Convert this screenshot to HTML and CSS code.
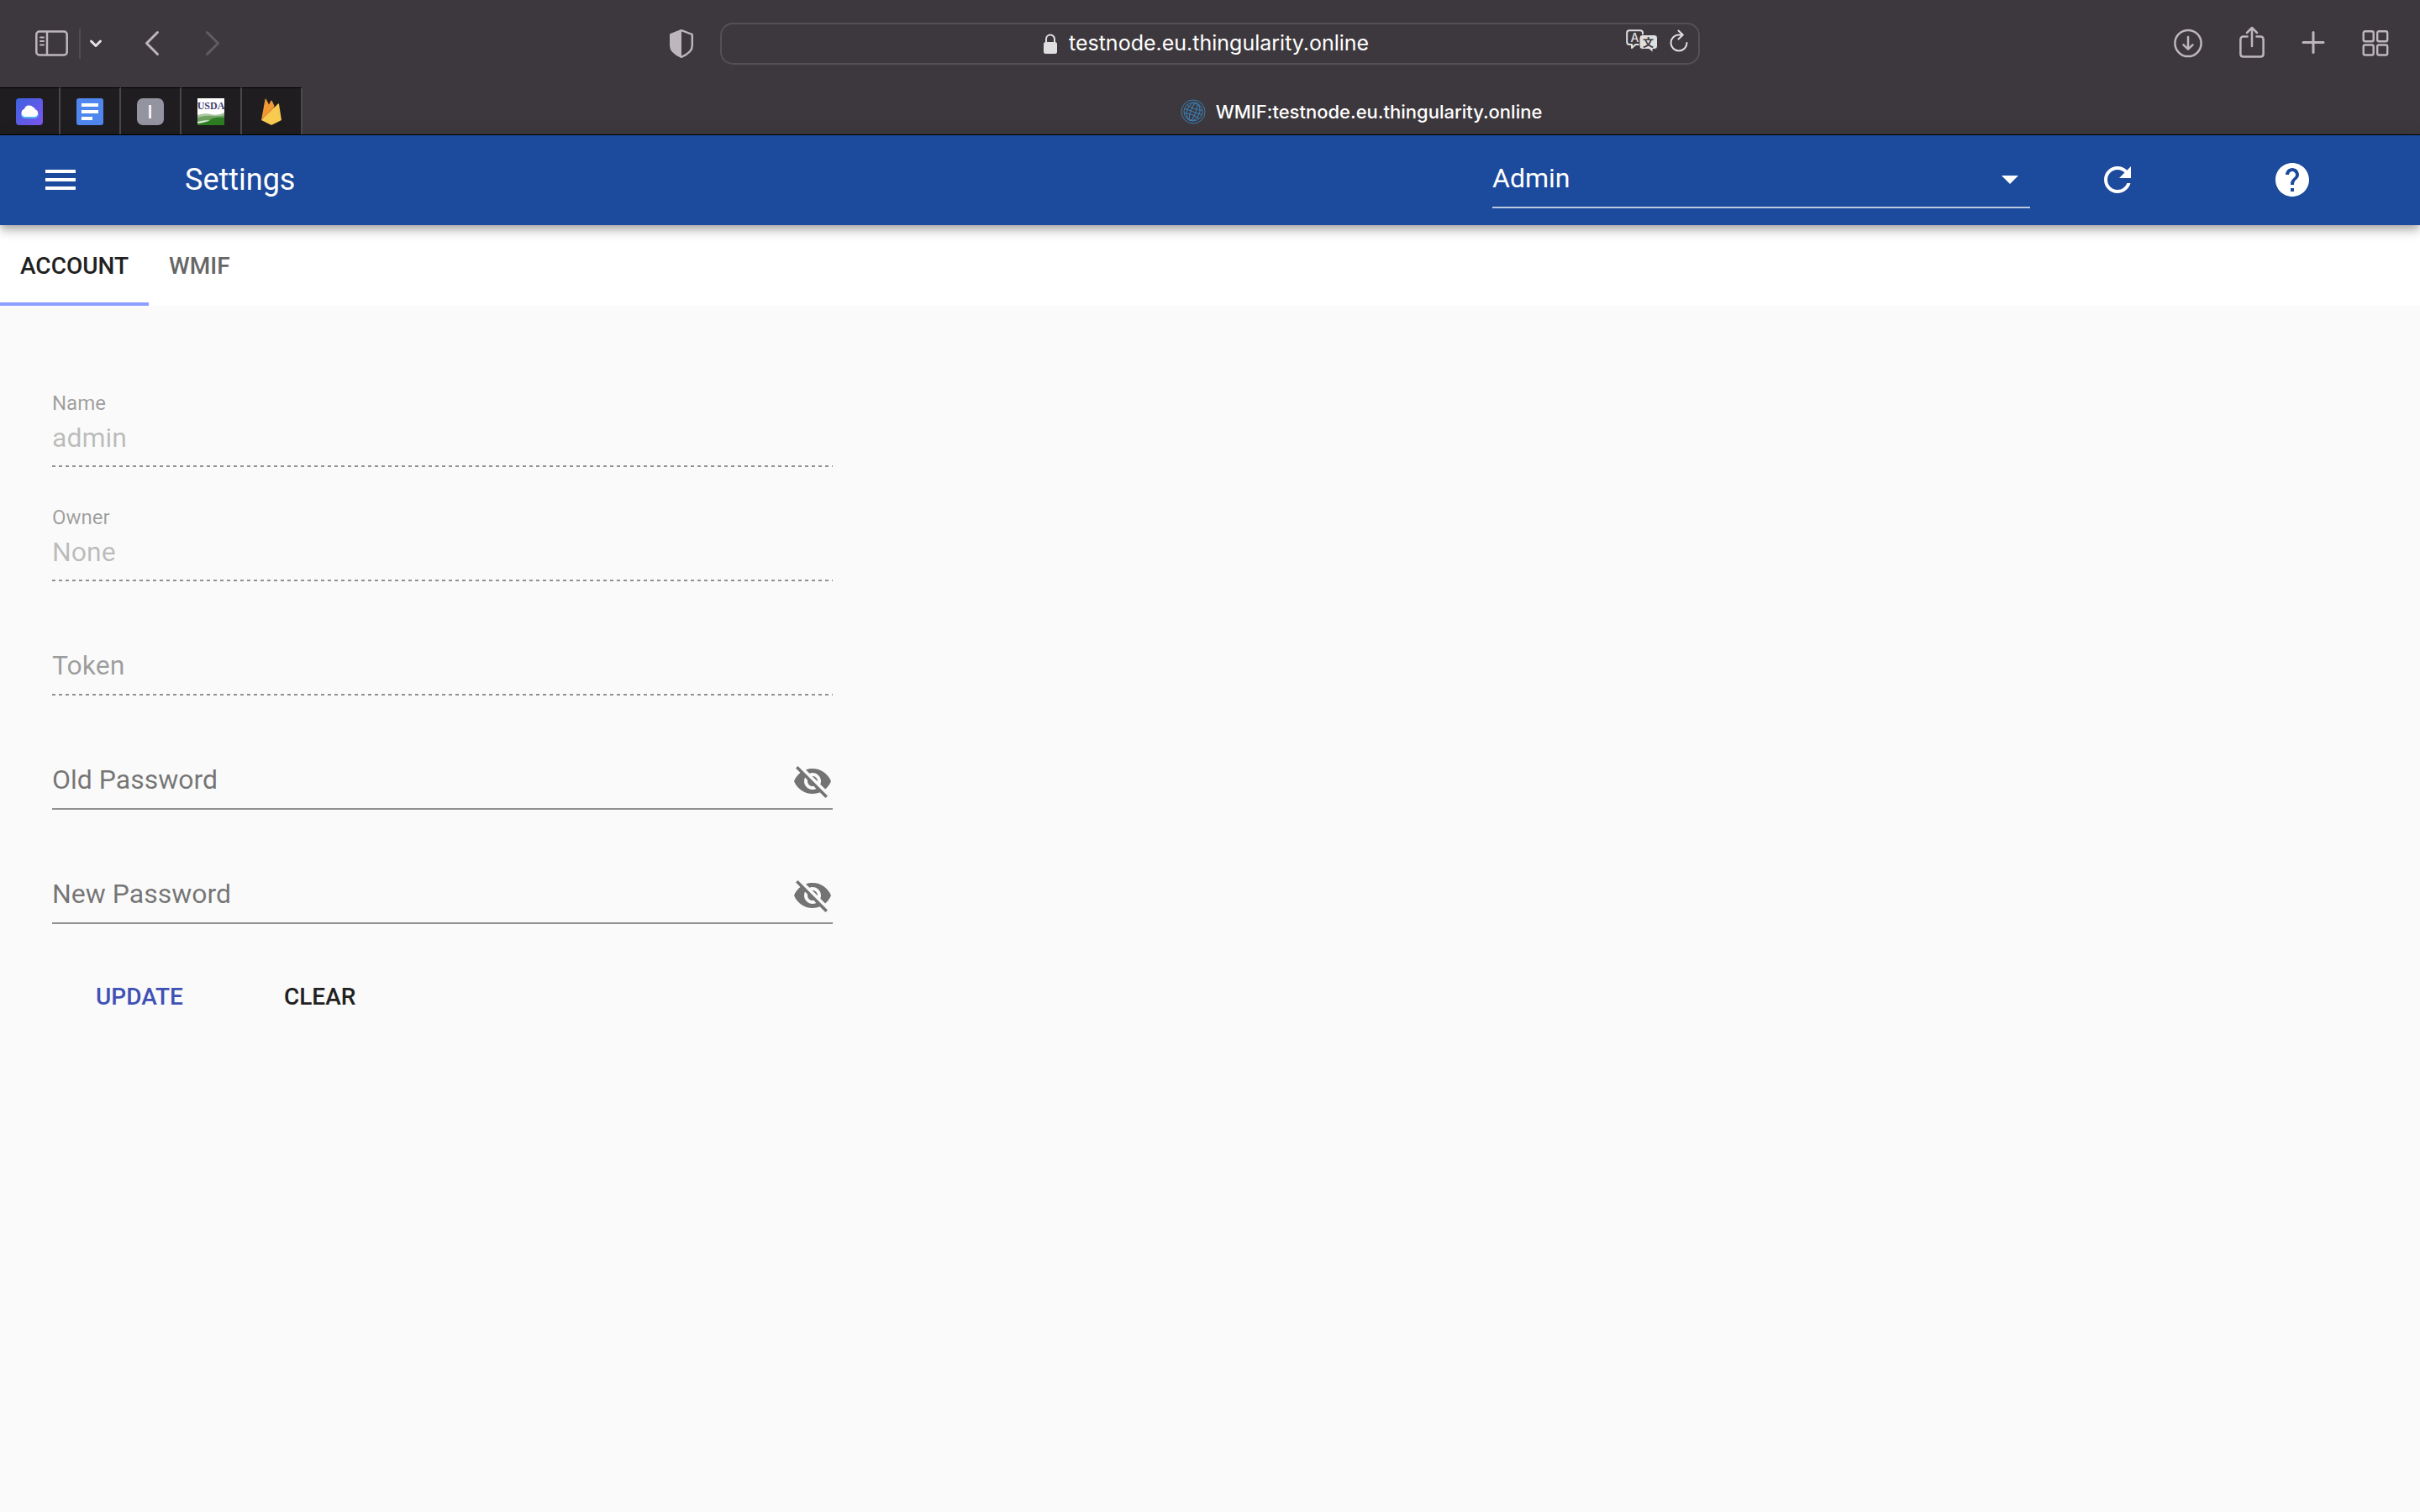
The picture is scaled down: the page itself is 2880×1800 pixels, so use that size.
FILE: index.html
```html
<!DOCTYPE html>
<html lang="en">
  <head>
    <meta charset="utf-8">
    <title>WMIF:testnode.eu.thingularity.online</title>
    <link rel="stylesheet" href="styles.css">
  </head>
  <body>

  <div class="browser">
    <div class="toolbar">
      <div class="toolbar-left">
        <button class="tool" aria-label="Sidebar">
          <svg width="39" height="32" viewBox="0 0 39 32" fill="none" stroke="#bdb7bd" stroke-width="2.500">
            <rect x="1.300" y="1.500" width="36.400" height="28" rx="3.500"/>
            <path d="M14 2v27"/>
            <path d="M6 8.500h4M6 13h4M6 17.500h4" stroke-width="2" stroke-linecap="round"/>
          </svg>
        </button>
        <span class="tool-divider"></span>
        <button class="tool tool-more" aria-label="Tab groups">
          <svg width="16" height="12" viewBox="0 0 16 12" fill="none" stroke="#e6e2e6" stroke-width="3" stroke-linecap="round" stroke-linejoin="round"><path d="M2.500 3L8 8.500L13.500 3"/></svg>
        </button>
        <button class="tool tool-back" aria-label="Back">
          <svg width="20" height="32" viewBox="0 0 20 32" fill="none" stroke="#bdb7bd" stroke-width="3" stroke-linecap="round" stroke-linejoin="round"><path d="M16.500 2.500L3.500 15.500L16.500 28.500"/></svg>
        </button>
        <button class="tool tool-forward" aria-label="Forward">
          <svg width="20" height="32" viewBox="0 0 20 32" fill="none" stroke="#615c62" stroke-width="3" stroke-linecap="round" stroke-linejoin="round"><path d="M3.500 2.500L16.500 15.500L3.500 28.500"/></svg>
        </button>
        <button class="tool tool-shield" aria-label="Privacy report">
          <svg width="28" height="34" viewBox="0 0 28 34"><path d="M14 1.200L26.800 6V19.500C26.800 25.500 20.500 30 14 32.800C7.500 30 1.200 25.500 1.200 19.500V6Z" fill="none" stroke="#bdb7bd" stroke-width="2.400" stroke-linejoin="round"/><path d="M14 1.200V32.800C7.500 30 1.200 25.500 1.200 19.500V6Z" fill="#bdb7bd"/></svg>
        </button>
      </div>

      <div class="address">
        <div class="address-main">
          <label for="url" aria-label="Address">
            <svg width="16" height="24" viewBox="0 0 16 24"><rect y="10" width="16" height="14" rx="2.500" fill="#e0dfe0"/><path d="M3 11V6.500a5 5 0 0 1 10 0V11" fill="none" stroke="#e0dfe0" stroke-width="2"/></svg>
          </label>
          <input class="address-input" id="url" type="text" value="testnode.eu.thingularity.online">
        </div>
        <div class="address-tools">
          <button class="tool" aria-label="Translate">
            <svg width="38" height="28" viewBox="0 0 38 28">
              <path d="M4 1.200H17Q20 1.200 20 4.200V15Q20 18 17 18H11.500L7 22V18H4.200Q1.200 18 1.200 15V4.200Q1.200 1.200 4 1.200Z" fill="none" stroke="#e0dfe0" stroke-width="2" stroke-linejoin="round"/>
              <text x="10.500" y="14.500" class="glyph-a">A</text>
              <path d="M19.500 6.500H34Q37.500 6.500 37.500 10V20Q37.500 23.500 34 23.500H32V27.500L27.500 23.500H19.500Q16 23.500 16 20V10Q16 6.500 19.500 6.500Z" fill="#e0dfe0" stroke="#3d383d" stroke-width="1"/>
              <text x="26.500" y="20" class="glyph-wen">文</text>
            </svg>
          </button>
          <button class="tool" aria-label="Reload">
            <svg width="22" height="28" viewBox="0 0 22 28" fill="none" stroke="#e0dfe0" stroke-width="2" stroke-linecap="round" stroke-linejoin="round"><path d="M20.500 16A9.500 9.500 0 1 1 11 6.500H15.500M10.500 1.500L15.800 6.500L10.500 11.500"/></svg>
          </button>
        </div>
      </div>

      <div class="toolbar-right">
        <button class="tool" aria-label="Downloads">
          <svg width="34" height="36" viewBox="0 0 34 36" fill="none" stroke="#bdb7bd" stroke-width="2.500" stroke-linecap="round" stroke-linejoin="round"><circle cx="17" cy="17.500" r="15.600"/><path d="M17 10V24.500M11.500 19.300L17 24.700L22.500 19.300"/></svg>
        </button>
        <button class="tool" aria-label="Share">
          <svg width="30" height="42" viewBox="0 0 30 42" fill="none" stroke="#bdb7bd" stroke-width="2.500" stroke-linecap="round" stroke-linejoin="round"><path d="M9.500 12.500H5Q1.400 12.500 1.400 16V33.500Q1.400 36.500 5 36.500H25Q28.600 36.500 28.600 33.500V16Q28.600 12.500 25 12.500H20.500"/><path d="M15 2.500V24M9 8L15 2L21 8"/></svg>
        </button>
        <button class="tool" aria-label="New tab">
          <svg width="28" height="30" viewBox="0 0 28 30" stroke="#bdb7bd" stroke-width="3" stroke-linecap="round"><path d="M14 1.500V25.500M2 13.500H26"/></svg>
        </button>
        <button class="tool" aria-label="Tab overview">
          <svg width="32" height="32" viewBox="0 0 32 32" fill="none" stroke="#bdb7bd" stroke-width="2.400"><rect x="1.700" y="1.200" width="12" height="12" rx="2"/><rect x="18.200" y="1.200" width="12" height="12" rx="2"/><rect x="1.700" y="17.500" width="12" height="12" rx="2"/><rect x="18.200" y="17.500" width="12" height="12" rx="2"/></svg>
        </button>
      </div>
    </div>

    <div class="tabstrip">
      <button class="pinned" aria-label="Cloud">
        <svg width="32" height="32" viewBox="0 0 32 32">
          <defs><linearGradient id="cloudBg" x1="0" y1="0" x2="1" y2="1"><stop offset="0" stop-color="#3c62de"/><stop offset="1" stop-color="#7c55ee"/></linearGradient></defs>
          <rect width="32" height="32" rx="4" fill="url(#cloudBg)"/>
          <path d="M11 24a5 5 0 0 1-5-6h21a5 5 0 0 1-5 6z" fill="#4cb6f5"/>
          <path d="M10.500 22A4.800 4.800 0 0 1 10 12.700A6 6 0 0 1 20.300 10.500A4.500 4.500 0 0 1 23 13.300A4.500 4.500 0 0 1 22.500 22Z" fill="#fff"/>
        </svg>
      </button>
      <button class="pinned" aria-label="Docs">
        <svg width="32" height="32" viewBox="0 0 32 32"><rect width="32" height="32" rx="3" fill="#4f87ee"/><path d="M6 6h20v4H6zM6 14h20v4H6zM6 22h13v4H6z" fill="#fff"/></svg>
      </button>
      <button class="pinned" aria-label="I">
        <svg width="32" height="32" viewBox="0 0 32 32"><rect width="32" height="32" rx="7" fill="#9394a0"/><text x="15.500" y="24" class="glyph-i">I</text></svg>
      </button>
      <button class="pinned" aria-label="USDA">
        <svg width="32" height="32" viewBox="0 0 32 32">
          <rect width="32" height="32" fill="#fff"/>
          <path d="M0 20Q8 17 16 19Q24 21 32 17V32H0Z" fill="#a9c6a0"/>
          <path d="M0 23Q10 20 17 21Q25 22 32 20V32H0Z" fill="#6fa163"/>
          <path d="M0 29Q12 28 18 24Q25 22 32 23V32H0Z" fill="#2f7d22"/>
          <path d="M0 28Q8 26 15 26Q9 29 0 30Z" fill="#dfeedd"/>
          <text x="16" y="13" class="glyph-usda">USDA</text>
        </svg>
      </button>
      <button class="pinned" aria-label="Firebase">
        <svg width="32" height="32" viewBox="0 0 32 32">
          <path d="M4 26L8.600 .800Q9 0 9.600 .800L14 9.500Z" fill="#ee9a35"/>
          <path d="M4 26L15.500 3Q16 2.300 16.600 3L20 12Z" fill="#e0752d"/>
          <path d="M11 12L15.500 3Q16 2.300 16.600 3L19.500 9L4 26Z" fill="#ee9a35"/>
          <path d="M4 26L24 6.500Q24.800 6 25 7L28 26L17 31.500Q16 32 15 31.500Z" fill="#f7cb50"/>
        </svg>
      </button>
      <div class="active-tab">
        <svg width="30" height="30" viewBox="0 0 30 30" fill="none" stroke="#3a7fb5">
          <circle cx="15" cy="15" r="14"/><circle cx="15" cy="15" r="11"/>
          <g transform="rotate(20 15 15)"><ellipse cx="15" cy="15" rx="3" ry="11"/><ellipse cx="15" cy="15" rx="7.500" ry="11"/><path d="M4 15H26M5.500 10Q15 12.500 24.500 10M5.500 20Q15 17.500 24.500 20"/></g>
        </svg>
        <span>WMIF:testnode.eu.thingularity.online</span>
      </div>
    </div>
  </div>

  <header class="appbar">
    <button class="icon-button" aria-label="Menu">
      <svg class="icon" viewBox="0 0 24 24"><path d="M3 18h18v-2H3v2zm0-5h18v-2H3v2zm0-7v2h18V6H3z"/></svg>
    </button>
    <h1 class="title">Settings</h1>
    <div class="select-wrap">
      <select class="select" id="user" aria-label="User">
        <option>Admin</option>
      </select>
      <svg class="icon select-arrow" viewBox="0 0 24 24"><path d="M7 10l5 5 5-5z"/></svg>
    </div>
    <button class="icon-button refresh" aria-label="Refresh">
      <svg class="icon" viewBox="0 0 24 24"><path d="M17.650 6.350C16.200 4.900 14.210 4 12 4c-4.420 0-7.990 3.580-7.990 8s3.570 8 7.990 8c3.730 0 6.840-2.550 7.730-6h-2.080c-.820 2.330-3.040 4-5.650 4-3.310 0-6-2.690-6-6s2.690-6 6-6c1.660 0 3.140.690 4.220 1.780L13 11h7V4l-2.350 2.350z"/></svg>
    </button>
    <button class="icon-button help" aria-label="Help">
      <svg class="icon" viewBox="0 0 24 24"><path d="M12 2C6.480 2 2 6.480 2 12s4.480 10 10 10 10-4.480 10-10S17.520 2 12 2zm1 17h-2v-2h2v2zm2.070-7.750l-.900.920C13.450 12.900 13 13.500 13 15h-2v-.500c0-1.100.450-2.100 1.170-2.830l1.240-1.260c.370-.360.590-.860.590-1.410 0-1.100-.900-2-2-2s-2 .900-2 2H8c0-2.210 1.790-4 4-4s4 1.790 4 4c0 .880-.360 1.680-.930 2.250z"/></svg>
    </button>
  </header>

  <nav class="tabs">
    <button class="tab selected">ACCOUNT</button>
    <button class="tab">WMIF</button>
  </nav>

  <main class="content">
    <form class="form">
      <div class="field disabled">
        <label for="name">Name</label>
        <div class="input-line"><input id="name" type="text" value="admin" disabled></div>
      </div>
      <div class="field disabled">
        <label for="owner">Owner</label>
        <div class="input-line"><input id="owner" type="text" value="None" disabled></div>
      </div>
      <div class="field disabled empty">
        <label for="token">Token</label>
        <div class="input-line"><input id="token" type="text" disabled></div>
      </div>
      <div class="field empty">
        <label for="oldPassword">Old Password</label>
        <div class="input-line">
          <input id="oldPassword" type="password">
          <button class="icon-button eye" type="button" aria-label="Show old password">
            <svg class="icon" viewBox="0 0 24 24"><path d="M12 7c2.760 0 5 2.240 5 5 0 .650-.130 1.260-.360 1.830l2.920 2.920c1.510-1.260 2.700-2.890 3.430-4.750-1.730-4.390-6-7.500-11-7.500-1.400 0-2.740.250-3.980.700l2.160 2.160C10.740 7.130 11.350 7 12 7zM2 4.270l2.280 2.280.460.460C3.080 8.300 1.780 10.020 1 12c1.730 4.390 6 7.500 11 7.500 1.550 0 3.030-.300 4.380-.840l.420.420L19.730 22 21 20.730 3.270 3 2 4.270zM7.530 9.800l1.550 1.550c-.050.210-.080.430-.080.650 0 1.660 1.340 3 3 3 .220 0 .440-.030.650-.080l1.550 1.550c-.670.330-1.410.530-2.200.530-2.760 0-5-2.240-5-5 0-.790.200-1.530.530-2.200zm4.310-.780l3.150 3.150.020-.160c0-1.660-1.340-3-3-3l-.170.010z"/></svg>
          </button>
        </div>
      </div>
      <div class="field empty">
        <label for="newPassword">New Password</label>
        <div class="input-line">
          <input id="newPassword" type="password">
          <button class="icon-button eye" type="button" aria-label="Show new password">
            <svg class="icon" viewBox="0 0 24 24"><path d="M12 7c2.760 0 5 2.240 5 5 0 .650-.130 1.260-.360 1.830l2.920 2.920c1.510-1.260 2.700-2.890 3.430-4.750-1.730-4.390-6-7.500-11-7.500-1.400 0-2.740.250-3.980.700l2.160 2.160C10.740 7.130 11.350 7 12 7zM2 4.270l2.280 2.280.460.460C3.080 8.300 1.780 10.020 1 12c1.730 4.390 6 7.500 11 7.500 1.550 0 3.030-.300 4.380-.840l.420.420L19.730 22 21 20.730 3.270 3 2 4.270zM7.530 9.800l1.550 1.550c-.050.210-.080.430-.080.650 0 1.660 1.340 3 3 3 .220 0 .440-.030.650-.080l1.550 1.550c-.670.330-1.410.530-2.200.530-2.760 0-5-2.240-5-5 0-.790.200-1.530.530-2.200zm4.310-.780l3.150 3.150.020-.160c0-1.660-1.340-3-3-3l-.170.010z"/></svg>
          </button>
        </div>
      </div>
      <div class="actions">
        <button class="action primary" type="button">UPDATE</button>
        <button class="action" type="reset">CLEAR</button>
      </div>
    </form>
  </main>

  </body>
</html>
```

FILE: styles.css
```css
* {
  box-sizing: border-box;
}
body {
  margin: 0;
  min-height: 100vh;
  background: #fafafa;
  font-family: Roboto, sans-serif;
}
button, input, select {
  margin: 0;
  padding: 0;
  border: none;
  background: none;
  font-family: inherit;
  outline: none;
}
button {
  cursor: pointer;
}
svg {
  display: block;
}

/* browser chrome */
.browser {
  background: #3d383d;
  border-bottom: 1px solid #000;
  font-family: Inter, sans-serif;
}
.toolbar {
  display: grid;
  grid-template-columns: 1fr 40.5% 1fr;
  align-items: center;
  height: 104px;
}
.toolbar-left {
  display: flex;
  align-items: center;
  padding: 0 32px 0 42px;
}
.tool-divider {
  width: 2px;
  height: 36px;
  margin: 0 10px 0 13px;
  background: #514c52;
}
.tool-back {
  margin-left: 49px;
}
.tool-forward {
  margin-left: 52px;
}
.tool-shield {
  margin-left: auto;
}
.address {
  display: grid;
  grid-template-columns: 1fr auto 1fr;
  align-items: center;
  height: 50px;
  border: 2px solid #545056;
  border-radius: 15px;
}
.address-main {
  display: flex;
  grid-column: 2;
  align-items: center;
  gap: 14px;
}
.address-input {
  width: 366px;
  padding-bottom: 2px;
  color: #fff;
  font-size: 25px;
}
.address-tools {
  display: flex;
  justify-content: flex-end;
  gap: 14px;
  padding: 0 12px 6px 0;
}
.toolbar-right {
  display: flex;
  align-items: center;
  justify-content: flex-end;
  gap: 44px;
  padding-right: 37px;
}
.glyph-a {
  fill: #e0dfe0;
  font: 500 14px Inter, sans-serif;
  text-anchor: middle;
}
.glyph-wen {
  fill: #3d383d;
  font: 700 13px "Noto Sans CJK SC", sans-serif;
  text-anchor: middle;
}
.glyph-i {
  fill: #fff;
  font: 500 22px Inter, sans-serif;
  text-anchor: middle;
}
.glyph-usda {
  fill: #3e3f72;
  font: 700 12px "Liberation Serif", serif;
  text-anchor: middle;
}

.tabstrip {
  display: flex;
  height: 56px;
}
.pinned {
  display: flex;
  align-items: center;
  justify-content: center;
  width: 72px;
  border-top: 1px solid #000;
  border-right: 2px solid #4b474c;
  background: #1f1d20;
}
.active-tab {
  display: flex;
  flex: 1;
  align-items: center;
  justify-content: center;
  gap: 12px;
  padding-top: 2px;
  color: #fff;
  font-size: 22px;
  font-weight: 500;
}

/* app bar */
.appbar {
  position: relative;
  display: flex;
  align-items: center;
  height: 107px;
  padding: 0 128px 1px 48px;
  background: #1c4a9c;
  color: #fff;
  box-shadow: 0 4px 8px -2px rgba(0,0,0,0.2), 0 8px 10px 0 rgba(0,0,0,0.14), 0 2px 20px 0 rgba(0,0,0,0.12);
}
.icon-button {
  color: inherit;
}
.icon {
  width: 48px;
  height: 48px;
  fill: currentColor;
}
.title {
  flex: 1;
  margin: 0 0 0 124px;
  font-size: 36px;
  font-weight: 400;
}
.select-wrap {
  display: grid;
  align-items: center;
  width: 640px;
  height: 68px;
  border-bottom: 2px solid rgba(255,255,255,0.7);
}
.select, .select-arrow {
  grid-area: 1 / 1;
}
.select {
  width: 100%;
  height: 64px;
  padding-bottom: 2px;
  appearance: none;
  color: #fff;
  font-size: 32px;
}
.select option {
  color: #212121;
}
.select-arrow {
  justify-self: end;
  pointer-events: none;
}
.refresh {
  margin-left: 80px;
}
.help {
  margin-left: 160px;
}

/* tabs */
.tabs {
  display: flex;
  height: 96px;
  background: #fff;
}
.tab {
  padding: 0 24px;
  border-top: 4px solid transparent;
  border-bottom: 4px solid transparent;
  color: #666;
  font-size: 28px;
  font-weight: 500;
}
.selected {
  border-bottom-color: #8c9eff;
  color: #212121;
}

/* account form */
.content {
  display: grid;
  grid-template-columns: repeat(3, 1fr);
  padding: 96px 30px 40px 62px;
}
.form {
  display: flex;
  flex-direction: column;
  gap: 40px;
}
.field {
  display: grid;
  grid-template-rows: 32px 64px;
}
.field label {
  grid-area: 1 / 1;
  align-self: end;
  color: rgba(0,0,0,0.54);
  font-size: 24px;
  line-height: 24px;
  pointer-events: none;
}
.field.empty label {
  grid-area: 2 / 1;
  align-self: center;
  padding-bottom: 8px;
  font-size: 32px;
  line-height: 40px;
}
.field.disabled label {
  color: rgba(0,0,0,0.38);
}
.input-line {
  display: flex;
  grid-area: 2 / 1;
  align-items: center;
  border-bottom: 2px solid rgba(0,0,0,0.42);
}
.input-line input {
  flex: 1;
  height: 62px;
  padding-bottom: 6px;
  color: rgba(0,0,0,0.87);
  font-size: 32px;
}
.disabled .input-line {
  border-bottom: none;
  background: repeating-linear-gradient(90deg, rgba(0,0,0,0.42) 0 4px, transparent 4px 8px) bottom / 100% 2px no-repeat;
}
.disabled input {
  color: rgba(0,0,0,0.26);
}
.eye {
  padding-bottom: 2px;
  color: rgba(0,0,0,0.54);
}
.actions {
  display: flex;
  gap: 88px;
  padding: 18px 0 0 36px;
}
.action {
  padding: 12px 16px;
  color: #212121;
  font-size: 28px;
  font-weight: 500;
}
.primary {
  color: #3f51b5;
}
```
